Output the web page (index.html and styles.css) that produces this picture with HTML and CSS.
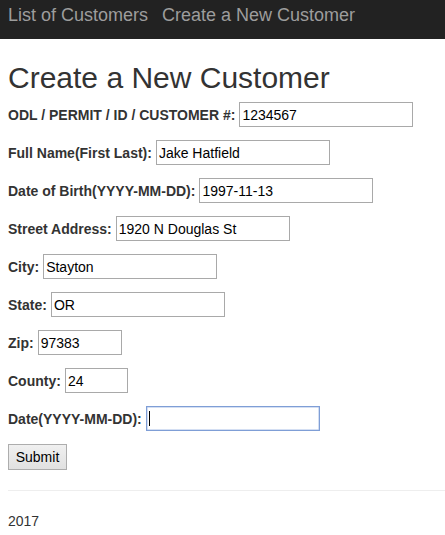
FILE: index.html
```html
<!DOCTYPE html>
<html>
<head>
<meta charset="utf-8">
<title>Create a New Customer</title>
<link rel="stylesheet" href="styles.css">
</head>
<body>
<nav class="navbar">
  <a class="nav-link" href="#">List of Customers</a>
  <a class="nav-link" href="#">Create a New Customer</a>
</nav>
<main class="container">
  <h1 class="page-title">Create a New Customer</h1>
  <form class="customer-form">
    <div class="form-row"><label class="field-label">ODL / PERMIT / ID / CUSTOMER #:</label><input class="field" type="text" value="1234567"></div>
    <div class="form-row"><label class="field-label">Full Name(First Last):</label><input class="field" type="text" value="Jake Hatfield"></div>
    <div class="form-row"><label class="field-label">Date of Birth(YYYY-MM-DD):</label><input class="field" type="text" value="1997-11-13"></div>
    <div class="form-row"><label class="field-label">Street Address:</label><input class="field" type="text" value="1920 N Douglas St"></div>
    <div class="form-row"><label class="field-label">City:</label><input class="field" type="text" value="Stayton"></div>
    <div class="form-row"><label class="field-label">State:</label><input class="field" type="text" value="OR"></div>
    <div class="form-row"><label class="field-label">Zip:</label><input class="field field-zip" type="text" value="97383"></div>
    <div class="form-row"><label class="field-label">County:</label><input class="field field-county" type="text" value="24"></div>
    <div class="form-row"><label class="field-label">Date(YYYY-MM-DD):</label><span class="focus-wrap"><input class="field field-focused" type="text" value=""><span class="caret"></span></span></div>
    <button class="submit-btn" type="button">Submit</button>
  </form>
  <hr class="divider">
  <footer class="footer">2017</footer>
</main>
</body>
</html>
```

FILE: styles.css
```css
html, body {
  margin: 0;
  padding: 0;
  background: #fff;
}
body {
  font-family: "Liberation Sans", Arial, sans-serif;
  font-size: 14px;
  line-height: 20px;
  color: #333;
}
.navbar {
  height: 39px;
  box-sizing: border-box;
  background: #222;
  padding: 5px 0 0 8px;
  display: flex;
  gap: 14px;
}
.nav-link {
  font-size: 18px;
  line-height: 20px;
  color: #9d9d9d;
  text-decoration: none;
}
.container {
  padding: 0 0 0 8px;
}
.page-title {
  margin: 22px 0 8px;
  font-size: 30px;
  line-height: 33px;
  font-weight: 500;
  color: #333;
}
.customer-form {
  display: flex;
  flex-direction: column;
  align-items: flex-start;
  gap: 13px;
}
.form-row {
  display: flex;
  align-items: baseline;
  gap: 4px;
}
.field-label {
  font-weight: bold;
  color: #333;
}
.field {
  box-sizing: border-box;
  width: 174px;
  height: 25px;
  margin: 0;
  padding: 1px 2px;
  border: 1px solid #a9a9a9;
  font-family: "Liberation Sans", Arial, sans-serif;
  font-size: 14px;
  color: #000;
  background: #fff;
  outline: none;
}
.field-zip {
  width: 84px;
}
.field-county {
  width: 63px;
}
.field-focused {
  border-color: #7f9ed6;
  box-shadow: inset 0 0 0 0.5px #a9c0e8;
}
.focus-wrap {
  position: relative;
  display: inline-flex;
}
.caret {
  position: absolute;
  left: 3px;
  top: 5px;
  width: 1px;
  height: 15px;
  background: #000;
}
.submit-btn {
  box-sizing: border-box;
  width: 59px;
  height: 26px;
  margin: 0;
  padding: 0;
  border: 1px solid #adadad;
  border-radius: 0;
  background: linear-gradient(#f0f0f0, #e1e1e1);
  font-family: "Liberation Sans", Arial, sans-serif;
  font-size: 14px;
  color: #000;
}
.divider {
  margin: 20px 0 20px;
  border: 0;
  border-top: 1px solid #eee;
}
.footer {
  line-height: 20px;
}
```
